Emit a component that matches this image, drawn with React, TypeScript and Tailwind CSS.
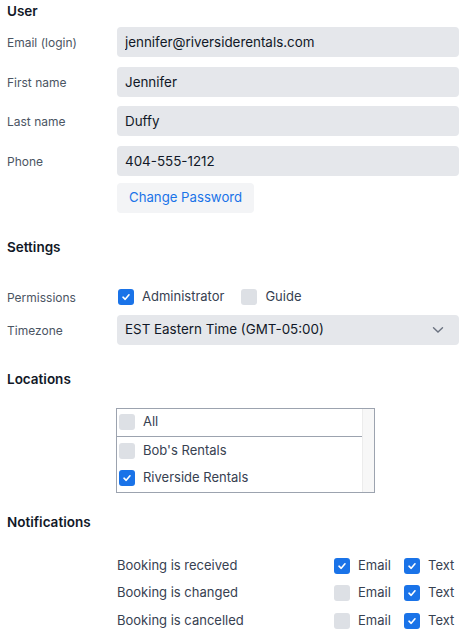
import { useState } from "react";

const labelCls = "text-[12px] text-[#4b5563] pt-[2px]";
const inputCls =
  "h-[30px] w-full rounded-[4px] bg-[#e5e7eb] px-2 text-[13.4px] text-[#111827] outline-none";

const Check = ({ checked }: { checked: boolean }) => (
  <span
    className={
      checked
        ? "flex h-4 w-4 shrink-0 items-center justify-center rounded-[3px] bg-[#1a73e8]"
        : "flex h-4 w-4 shrink-0 rounded-[3px] bg-[#dde0e5]"
    }
  >
    {checked && (
      <svg width="10" height="10" viewBox="0 0 10 10" fill="none">
        <path
          d="M2 5.2 L4.2 7.3 L8 2.8"
          stroke="white"
          strokeWidth="1.6"
          strokeLinecap="round"
          strokeLinejoin="round"
        />
      </svg>
    )}
  </span>
);

const Field = ({ label, value }: { label: string; value: string }) => (
  <div className="flex items-center">
    <label className={`${labelCls} w-[110px] shrink-0`}>{label}</label>
    <input className={inputCls} defaultValue={value} />
  </div>
);

const notifications = [
  { label: "Booking is received", email: true, text: true },
  { label: "Booking is changed", email: false, text: true },
  { label: "Booking is cancelled", email: false, text: true },
];

export default function App() {
  const [perm] = useState({ admin: true, guide: false });

  return (
    <div
      className="w-[472px] h-[640px] overflow-hidden bg-white pl-[7px] pr-[13px] text-[#111827]"
      style={{ fontFamily: "Inter, 'Noto Sans', sans-serif" }}
    >
      <h2 className="mt-[1px] h-5 text-[13.5px] font-semibold leading-5">User</h2>

      <div className="mt-[6px] flex flex-col gap-[9.5px]">
        <Field label="Email (login)" value="jennifer@riversiderentals.com" />
        <Field label="First name" value="Jennifer" />
        <Field label="Last name" value="Duffy" />
        <Field label="Phone" value="404-555-1212" />
      </div>

      <div className="mt-[7px] pl-[110px]">
        <button className="h-[30px] rounded-[4px] bg-[#f3f4f6] px-3 text-[13.2px] text-[#1a73e8]">
          Change Password
        </button>
      </div>

      <h2 className="mt-[24px] h-5 text-[13.5px] font-semibold leading-5">Settings</h2>

      <div className="mt-[30px] flex h-5 items-center">
        <span className={`${labelCls} w-[111px] shrink-0`}>Permissions</span>
        <div className="flex items-center gap-2">
          <Check checked={perm.admin} />
          <span className="text-[13px] text-[#374151]">Administrator</span>
        </div>
        <div className="ml-[17px] flex items-center gap-2">
          <Check checked={perm.guide} />
          <span className="text-[13px] text-[#374151]">Guide</span>
        </div>
      </div>

      <div className="mt-[8px] flex items-center">
        <span className={`${labelCls} w-[110px] shrink-0`}>Timezone</span>
        <div className="flex h-[30px] w-full items-center justify-between rounded-[4px] bg-[#e5e7eb] px-2">
          <span className="text-[13.4px] text-[#111827]">EST Eastern Time (GMT-05:00)</span>
          <svg width="12" height="8" viewBox="0 0 12 8" fill="none" className="mr-[7px]">
            <path d="M1.5 1.8 L6 6 L10.5 1.8" stroke="#6b7280" strokeWidth="1.4" strokeLinecap="round" />
          </svg>
        </div>
      </div>

      <h2 className="mt-[24px] h-5 text-[13.5px] font-semibold leading-5">Locations</h2>

      <div className="ml-[109px] mt-[19px] flex h-[85px] w-[259px] border border-[#9ca3af]">
        <div className="flex flex-1 flex-col">
          <div className="flex h-[28px] items-center gap-2 border-b border-[#9ca3af] pl-[2px]">
            <Check checked={false} />
            <span className="text-[13px] text-[#374151]">All</span>
          </div>
          <div className="flex h-[28px] items-center gap-2 pl-[2px]">
            <Check checked={false} />
            <span className="text-[13px] text-[#374151]">Bob's Rentals</span>
          </div>
          <div className="flex h-[27px] items-center gap-2 pl-[2px]">
            <Check checked={true} />
            <span className="text-[13px] text-[#374151]">Riverside Rentals</span>
          </div>
        </div>
        <div className="w-[12px] border-l border-[#ececec] bg-[#f7f7f7]" />
      </div>

      <h2 className="mt-[19px] h-5 text-[13.5px] font-semibold leading-5">Notifications</h2>

      <div className="mt-[24px] flex flex-col gap-[7.5px] pl-[110px]">
        {notifications.map((n) => (
          <div key={n.label} className="flex h-5 items-center">
            <span className="w-[217px] text-[13px] text-[#374151]">{n.label}</span>
            <div className="flex w-[70px] items-center gap-2">
              <Check checked={n.email} />
              <span className="text-[13px] text-[#374151]">Email</span>
            </div>
            <div className="flex items-center gap-2">
              <Check checked={n.text} />
              <span className="text-[13px] text-[#374151]">Text</span>
            </div>
          </div>
        ))}
      </div>
    </div>
  );
}
